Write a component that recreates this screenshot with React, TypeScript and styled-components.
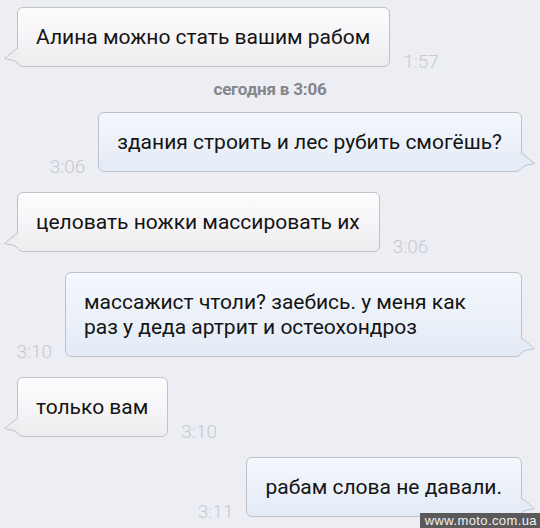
import React from "react";
import styled, { createGlobalStyle } from "styled-components";

const Global = createGlobalStyle`
  html, body {
    margin: 0;
    padding: 0;
    background: #eceef4;
  }
`;

const Screen = styled.div`
  position: relative;
  width: 540px;
  height: 528px;
  overflow: hidden;
  background: #eceef4;
  padding-top: 7px;
  box-sizing: border-box;
  display: flex;
  flex-direction: column;
  gap: 20px;
  font-family: Roboto, "Noto Sans", sans-serif;
`;

const Row = styled.div<{ $out?: boolean }>`
  display: flex;
  align-items: flex-end;
  gap: 13px;
  justify-content: ${p => (p.$out ? "flex-end" : "flex-start")};
  padding: ${p => (p.$out ? "0 18px 0 0" : "0 0 0 17px")};
`;

const Bubble = styled.div<{ $out?: boolean; $width?: number }>`
  position: relative;
  box-sizing: border-box;
  width: ${p => (p.$width ? `${p.$width}px` : "auto")};
  padding: 17px 19px 16px 18px;
  border: 1px solid #bfc2ca;
  border-radius: 6px;
  font-size: 21px;
  line-height: 25px;
  color: #141414;
  white-space: nowrap;
  background: ${p =>
    p.$out
      ? "linear-gradient(#f4f7fc, #e4ebf6)"
      : "linear-gradient(#fefdfe, #eeecef)"};
`;

const Tail = styled.svg<{ $out?: boolean }>`
  position: absolute;
  bottom: -2px;
  width: 16px;
  height: 22px;
  ${p => (p.$out ? "right: -15px; transform: scaleX(-1);" : "left: -15px;")}
`;

const Time = styled.span`
  font-size: 19px;
  font-weight: 300;
  color: #c6c9d0;
  line-height: 22px;
  margin-bottom: -6px;
`;

const DateLine = styled.div`
  text-align: center;
  font-size: 17px;
  font-weight: 700;
  color: #84868c;
  margin: -7px 0 -6px;
  line-height: 18px;
  letter-spacing: -0.2px;
`;

const Watermark = styled.div`
  position: absolute;
  right: 0;
  bottom: 0;
  padding: 0 3px 0 5px;
  height: 15px;
  line-height: 15px;
  background: #5a5a5a;
  color: #f0f0f0;
  font-family: "Liberation Sans", Arial, sans-serif;
  font-size: 13px;
  letter-spacing: 0.4px;
`;

function BubbleTail({ out }: { out?: boolean }) {
  const bottom = out ? "#e5ecf6" : "#efedf0";
  return (
    <Tail $out={out} viewBox="0 0 16 22">
      <path d="M16 1 L16 1 L1.5 12.5 Q5 13.6 8 13.8 Q12 14.2 16 18 Z" fill={bottom} />
      <path d="M15 1.5 L1.5 12.5 Q5 13.6 8 13.8 Q12 14.2 15 17.5" fill="none" stroke="#bfc2ca" strokeWidth="1" />
    </Tail>
  );
}

function Message({
  out,
  time,
  width,
  children,
}: {
  out?: boolean;
  time: string;
  width?: number;
  children: React.ReactNode;
}) {
  return (
    <Row $out={out}>
      {out && <Time>{time}</Time>}
      <Bubble $out={out} $width={width}>
        {children}
        <BubbleTail out={out} />
      </Bubble>
      {!out && <Time>{time}</Time>}
    </Row>
  );
}

export default function App() {
  return (
    <Screen>
      <Global />
      <Message time="1:57">Алина можно стать вашим рабом</Message>
      <DateLine>сегодня в 3:06</DateLine>
      <Message out time="3:06">здания строить и лес рубить смогёшь?</Message>
      <Message time="3:06">целовать ножки массировать их</Message>
      <Message out time="3:10" width={457}>
        массажист чтоли? заебись. у меня как
        <br />
        раз у деда артрит и остеохондроз
      </Message>
      <Message time="3:10">только вам</Message>
      <Message out time="3:11">рабам слова не давали.</Message>
      <Watermark>www.moto.com.ua</Watermark>
    </Screen>
  );
}
